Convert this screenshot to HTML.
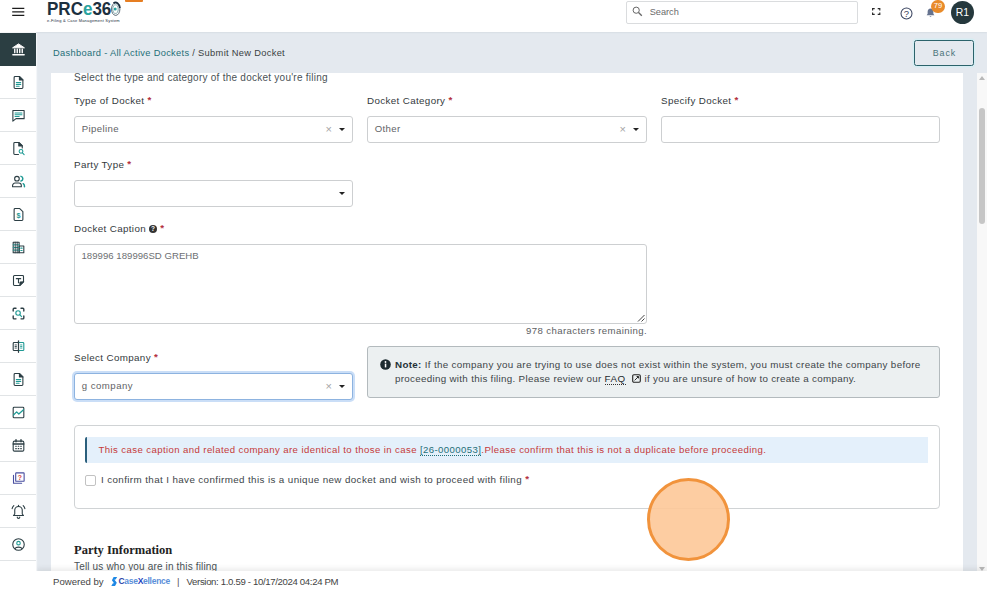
<!DOCTYPE html>
<html lang="en">
<head>
<meta charset="utf-8">
<title>Submit New Docket</title>
<style>
*{box-sizing:border-box;margin:0;padding:0}
html,body{width:987px;height:592px;overflow:hidden;background:#e4e9ef;font-family:"Liberation Sans",sans-serif;font-size:10px;color:#3a4144}
.abs{position:absolute}
#top{position:absolute;left:0;top:0;width:987px;height:32px;background:#fff;box-shadow:0 0 2px rgba(60,80,100,.18);z-index:5}
#side{position:absolute;left:0;top:33px;width:36px;height:559px;background:#fff;z-index:4;box-shadow:0 -1px 0 #fff, 1px 0 1px rgba(255,255,255,.6)}
.si{position:absolute;left:0;width:36px;height:33px;border-bottom:1px solid #e1e4e6}
.si svg{position:absolute}
#card{position:absolute;left:51px;top:73px;width:912px;height:499px;background:#fff;overflow:hidden}
#ci{position:absolute;left:0;top:-1px;width:912px;height:500px}
.lbl{position:absolute;font-size:9.8px;color:#33393c;white-space:nowrap;letter-spacing:.36px;line-height:12px}
.req{color:#b3303e;position:relative;top:-1px;font-weight:bold}
.inp{position:absolute;height:27px;border:1px solid #cdcfd1;border-radius:3px;background:#fff;font-size:9.6px;color:#5f6366;line-height:24px;padding-left:6.700px;letter-spacing:.38px}
.caret{position:absolute;right:7px;top:11px;width:0;height:0;border-left:3.2px solid transparent;border-right:3.2px solid transparent;border-top:3.6px solid #222}
.x{position:absolute;right:20px;top:0;font-size:11px;color:#a5a5a5;line-height:24px;letter-spacing:0}
.qm{display:inline-block;width:8px;height:8px;border-radius:4px;background:#333;color:#fff;font-size:6.5px;line-height:8px;text-align:center;font-weight:bold;letter-spacing:0;vertical-align:1px}
#foot{position:absolute;left:36px;top:571px;width:951px;height:21px;background:#fff;box-shadow:0 -2px 6px rgba(0,0,0,.09);z-index:3;font-size:9.6px;color:#444;line-height:21px;white-space:nowrap}
</style>
</head>
<body>
<div id="top">
  <svg class="abs" style="left:12px;top:7px" width="13" height="10" viewBox="0 0 13 10"><path d="M0.200 1.400h12.100M0.200 4.900h12.100M0.200 8.400h12.100" stroke="#1c1c1c" stroke-width="1.250"/></svg>
  <div class="abs" style="left:46.500px;top:-2px;font-size:18.600px;font-weight:bold;color:#1c3040;line-height:22px;white-space:nowrap;transform:scaleX(.915);transform-origin:0 0">PRC<span style="color:#2aa39f">e</span>36</div>
  <svg class="abs" style="left:110px;top:1px" width="12" height="16" viewBox="0 0 12 16"><ellipse cx="5.700" cy="8.100" rx="4.200" ry="6.300" fill="none" stroke="#1c3040" stroke-width=".7"/><ellipse cx="5.500" cy="8.100" rx="2.700" ry="4.300" fill="none" stroke="#5f8f95" stroke-width=".8"/><circle cx="5.200" cy="8" r="1.500" fill="#2aa39f"/><path d="M3.500 2.200A4.400 6.300 0 0 1 9.900 7" fill="none" stroke="#1c3040" stroke-width="1.700"/></svg>
  <div class="abs" style="left:47px;top:18.300px;font-size:4px;line-height:5px;color:#1c3040;white-space:nowrap;letter-spacing:.2px">e-Filing &amp; Case Management System</div>
  <div class="abs" style="left:125px;top:0;width:17.500px;height:2.400px;background:#e67e22;border-radius:0 0 1px 1px"></div>
  <div class="abs" style="left:625.500px;top:1px;width:232.500px;height:23px;border:1px solid #dadcde;border-radius:2px"></div>
  <svg class="abs" style="left:632px;top:6px" width="11" height="11" viewBox="0 0 11 11"><circle cx="4.200" cy="4.200" r="3.100" fill="none" stroke="#666" stroke-width="1"/><path d="M6.500 6.500L9.800 9.800" stroke="#666" stroke-width="1.300"/></svg>
  <div class="abs" style="left:649.700px;top:7.200px;font-size:9.200px;color:#6a6a6a">Search</div>
  <svg class="abs" style="left:872px;top:8px" width="9" height="7" viewBox="0 0 9 7"><path d="M0.600 2.400V0.600H2.700M5.700 0.600H7.800V2.400M7.800 4.600V6.400H5.700M2.700 6.400H0.600V4.600" fill="none" stroke="#2a2a2a" stroke-width="1.150"/></svg>
  <svg class="abs" style="left:899.700px;top:6.500px" width="13" height="13" viewBox="0 0 13 13"><circle cx="6.500" cy="6.500" r="5.500" fill="none" stroke="#3b4560" stroke-width="1.050"/><text x="6.500" y="9.800" font-size="9.500" text-anchor="middle" fill="#3b4560" font-family="Liberation Sans, sans-serif">?</text></svg>
  <svg class="abs" style="left:925.500px;top:7.500px" width="9" height="10" viewBox="0 0 11 12"><path d="M5.500 0.500C3.300 0.500 2 2.200 2 4.500V7L0.800 8.800H10.200L9 7V4.500C9 2.200 7.700 0.500 5.500 0.500ZM4.300 9.800A1.300 1.300 0 0 0 6.700 9.800Z" fill="#66738f"/></svg>
  <div class="abs" style="left:931px;top:0;width:14px;height:13px;border-radius:7px;background:#e98b2a;color:#fff;font-size:7.5px;line-height:12px;text-align:center">79</div>
  <div class="abs" style="left:951px;top:1px;width:23px;height:23px;border-radius:12px;background:#25383d;color:#fff;font-size:10.400px;line-height:23.500px;text-align:center">R1</div>
</div>

<div id="side">
<div class="si" style="top:0px;background:#2b3e42;border-bottom-color:#2b3e42"><svg viewBox="0 0 24 24" style="width:15px;height:15px;left:11px;top:9.400px" fill="none" stroke="#2c3e44" stroke-width="1.750" stroke-linecap="round" stroke-linejoin="round"><g stroke="#fff" fill="none"><path d="M3 9L12 3L21 9Z" fill="#fff" stroke-width="1.5"/><path d="M6 11.500V17M10 11.500V17M14 11.500V17M18 11.500V17" stroke-width="2.200"/><path d="M3 20.500H21" stroke-width="2.400"/></g></svg></div>
<div class="si" style="top:32.6px"><svg viewBox="0 0 24 24" style="width:15px;height:15px;left:11px;top:9.400px" fill="none" stroke="#2c3e44" stroke-width="1.750" stroke-linecap="round" stroke-linejoin="round"><path d="M6 2.500H14L19 7.500V20A1.500 1.500 0 0 1 17.500 21.500H6.500A1.500 1.500 0 0 1 5 20V4A1.500 1.500 0 0 1 6.500 2.500Z"/><path d="M13.500 2.500V8H19" fill="#2c3e44"/><path d="M8.500 12H15.500M8.500 15H15.500M8.500 18H13" stroke="#1f9a94" stroke-width="1.700"/></svg></div>
<div class="si" style="top:65.6px"><svg viewBox="0 0 24 24" style="width:15px;height:15px;left:11px;top:9.400px" fill="none" stroke="#2c3e44" stroke-width="1.750" stroke-linecap="round" stroke-linejoin="round"><path d="M3 4H21V17H8L3 21Z"/><path d="M6.500 8H17.500M6.500 10.800H17.500M6.500 13.500H13" stroke="#1f9a94" stroke-width="1.800"/></svg></div>
<div class="si" style="top:98.6px"><svg viewBox="0 0 24 24" style="width:15px;height:15px;left:11px;top:9.400px" fill="none" stroke="#2c3e44" stroke-width="1.750" stroke-linecap="round" stroke-linejoin="round"><path d="M12 21.500H6A1.500 1.500 0 0 1 4.500 20V4A1.500 1.500 0 0 1 6 2.500H13L18 7.500V11"/><path d="M12.500 2.500V8H18Z" fill="#2c3e44"/><circle cx="16" cy="16.500" r="3" stroke="#1f9a94"/><path d="M18.300 19L21 21.800" stroke="#1f9a94"/></svg></div>
<div class="si" style="top:131.6px"><svg viewBox="0 0 24 24" style="width:15px;height:15px;left:11px;top:9.400px" fill="none" stroke="#2c3e44" stroke-width="1.750" stroke-linecap="round" stroke-linejoin="round"><circle cx="9.500" cy="7.500" r="3.700"/><path d="M2.500 20.500V18.500A4 4 0 0 1 6.500 14.500H12.500A4 4 0 0 1 16.500 18.500V20.500Z"/><path d="M16 3.800A3.800 3.800 0 0 1 16 11.200M19.500 15.500A4 4 0 0 1 21.500 19V20.500" stroke="#1f9a94" stroke-width="2.400"/></svg></div>
<div class="si" style="top:164.6px"><svg viewBox="0 0 24 24" style="width:15px;height:15px;left:11px;top:9.400px" fill="none" stroke="#2c3e44" stroke-width="1.750" stroke-linecap="round" stroke-linejoin="round"><path d="M6 2.500H14L19 7.500V20A1.500 1.500 0 0 1 17.500 21.500H6.500A1.500 1.500 0 0 1 5 20V4A1.500 1.500 0 0 1 6.500 2.500Z"/><text x="12" y="18" font-size="11.500" font-weight="bold" fill="#1f9a94" stroke="none" text-anchor="middle" font-family="Liberation Sans, sans-serif">$</text></svg></div>
<div class="si" style="top:197.6px"><svg viewBox="0 0 24 24" style="width:15px;height:15px;left:11px;top:9.400px" fill="none" stroke="#2c3e44" stroke-width="1.750" stroke-linecap="round" stroke-linejoin="round"><path d="M3.500 3.500H13V20.500H3.500Z"/><path d="M13 9.500H20.500V20.500H13Z"/><path d="M3.500 7.700H13M3.500 12H13M3.500 16.200H13" stroke="#1f9a94" stroke-width="1.500"/><path d="M6.700 3.500V20.500M9.900 3.500V20.500" stroke-width="1.500"/><path d="M15.700 13H17.800M15.700 16.800H17.800" stroke="#1f9a94" stroke-width="1.700"/></svg></div>
<div class="si" style="top:230.6px"><svg viewBox="0 0 24 24" style="width:15px;height:15px;left:11px;top:9.400px" fill="none" stroke="#2c3e44" stroke-width="1.750" stroke-linecap="round" stroke-linejoin="round"><path d="M4 5.500A1.500 1.500 0 0 1 5.500 4H18.500A1.500 1.500 0 0 1 20 5.500V14L14 20H5.500A1.500 1.500 0 0 1 4 18.500Z"/><path d="M20 14H15.500A1.500 1.500 0 0 0 14 15.500V20Z" fill="#2c3e44" stroke-width="1"/><path d="M8.500 9H15.500M12 9V15.500" stroke-width="1.800"/></svg></div>
<div class="si" style="top:263.6px"><svg viewBox="0 0 24 24" style="width:15px;height:15px;left:11px;top:9.400px" fill="none" stroke="#2c3e44" stroke-width="1.750" stroke-linecap="round" stroke-linejoin="round"><path d="M3.500 8V5A1.500 1.500 0 0 1 5 3.500H8M16 3.500H19A1.500 1.500 0 0 1 20.500 5V8M20.500 16V19A1.500 1.500 0 0 1 19 20.500H16M8 20.500H5A1.500 1.500 0 0 1 3.500 19V16" stroke-width="2.200"/><circle cx="11.300" cy="11.300" r="3.600" stroke="#1f9a94"/><path d="M14 14L17 17" stroke="#1f9a94"/></svg></div>
<div class="si" style="top:296.6px"><svg viewBox="0 0 24 24" style="width:15px;height:15px;left:11px;top:9.400px" fill="none" stroke="#2c3e44" stroke-width="1.750" stroke-linecap="round" stroke-linejoin="round"><path d="M12.500 5.500H19A1.500 1.500 0 0 1 20.500 7V17A1.500 1.500 0 0 1 19 18.500H12.500" stroke="#1f9a94"/><path d="M15.300 9.500H17.500M15.300 12H17.500M15.300 14.500H17.500" stroke="#1f9a94" stroke-width="1.400"/><path d="M11.500 5.500H5A1.500 1.500 0 0 0 3.500 7V17A1.500 1.500 0 0 0 5 18.500H11.500"/><path d="M6.500 9.500H8.700M6.500 12H8.700M6.500 14.500H8.700" stroke-width="1.400"/><path d="M12 2.800V21.200" stroke-width="2"/></svg></div>
<div class="si" style="top:329.6px"><svg viewBox="0 0 24 24" style="width:15px;height:15px;left:11px;top:9.400px" fill="none" stroke="#2c3e44" stroke-width="1.750" stroke-linecap="round" stroke-linejoin="round"><path d="M6 2.500H14L19 7.500V20A1.500 1.500 0 0 1 17.500 21.500H6.500A1.500 1.500 0 0 1 5 20V4A1.500 1.500 0 0 1 6.500 2.500Z"/><path d="M13.500 2.500V8H19" fill="#2c3e44"/><path d="M8.500 12H15.500M8.500 15H15.500M8.500 18H13" stroke="#1f9a94" stroke-width="1.700"/></svg></div>
<div class="si" style="top:362.6px"><svg viewBox="0 0 24 24" style="width:15px;height:15px;left:11px;top:9.400px" fill="none" stroke="#2c3e44" stroke-width="1.750" stroke-linecap="round" stroke-linejoin="round"><rect x="3.500" y="3.500" width="17" height="17" rx="1.500"/><path d="M4 16L9 11L12.500 14.500L20 7.500" stroke="#1f9a94" stroke-width="2"/></svg></div>
<div class="si" style="top:395.6px"><svg viewBox="0 0 24 24" style="width:15px;height:15px;left:11px;top:9.400px" fill="none" stroke="#2c3e44" stroke-width="1.750" stroke-linecap="round" stroke-linejoin="round"><rect x="3.500" y="5" width="17" height="16" rx="2"/><path d="M3.500 9.500H20.500M8 2.500V6M16 2.500V6" stroke-width="2.200"/><path d="M7.500 13.200H8.500M11.500 13.200H12.500M15.500 13.200H16.500M7.500 17H8.500M11.500 17H12.500M15.500 17H16.500" stroke-width="1.800"/></svg></div>
<div class="si" style="top:428.6px"><svg viewBox="0 0 24 24" style="width:15px;height:15px;left:11px;top:9.400px" fill="none" stroke="#2c3e44" stroke-width="1.750" stroke-linecap="round" stroke-linejoin="round"><g stroke="#4a4fa0"><rect x="7.500" y="3" width="13.500" height="13.500" rx="1"/><path d="M4 7V19.500H17"/></g><text x="14.200" y="14" font-size="11" font-weight="bold" fill="#d9453b" stroke="none" text-anchor="middle" font-family="Liberation Sans, sans-serif">?</text></svg></div>
<div class="si" style="top:461.6px"><svg viewBox="0 0 24 24" style="width:15px;height:15px;left:11px;top:9.400px" fill="none" stroke="#2c3e44" stroke-width="1.750" stroke-linecap="round" stroke-linejoin="round"><path d="M12 4A6 6 0 0 0 6 10V16L4 18.500H20L18 16V10A6 6 0 0 0 12 4Z"/><path d="M10 21A2 2 0 0 0 14 21" stroke-width="1.800"/><path d="M12 2.200V4" stroke-width="1.800"/><path d="M4.500 2.500A9 9 0 0 0 1.800 7.500M19.500 2.500A9 9 0 0 1 22.200 7.500" stroke-width="1.800"/></svg></div>
<div class="si" style="top:494.6px"><svg viewBox="0 0 24 24" style="width:15px;height:15px;left:11px;top:9.400px" fill="none" stroke="#2c3e44" stroke-width="1.750" stroke-linecap="round" stroke-linejoin="round"><circle cx="12" cy="12" r="9.200"/><circle cx="12" cy="9.800" r="2.800" stroke="#1f9a94"/><path d="M6.500 18.500C8 15.500 16 15.500 17.500 18.500" stroke-width="1.800"/></svg></div>
</div>

<div class="abs" style="left:53px;top:48px;font-size:9.300px;color:#3a3f42;white-space:nowrap;letter-spacing:.31px"><span style="color:#1f6f78">Dashboard - All Active Dockets</span> / Submit New Docket</div>
<div class="abs" style="left:914px;top:40px;width:60px;height:26px;border:1.5px solid #2b636b;border-radius:2.500px;color:#4a747a;font-size:8.900px;line-height:25.400px;text-align:center;letter-spacing:.95px;text-indent:.9px;box-shadow:0 0 0 1.500px rgba(205,240,245,.65)">Back</div>

<div id="card"><div id="ci">
<div class="abs" style="left:23px;top:0px;font-size:10px;color:#4a5256;white-space:nowrap;letter-spacing:.25px;line-height:12px">Select the type and category of the docket you're filing</div>

<div class="lbl" style="left:23px;top:23px">Type of Docket <span class="req">*</span></div>
<div class="lbl" style="left:316px;top:23px">Docket Category <span class="req">*</span></div>
<div class="lbl" style="left:610px;top:23px">Specify Docket <span class="req">*</span></div>
<div class="inp" style="left:23px;top:44px;width:279px">Pipeline<span class="x">×</span><i class="caret"></i></div>
<div class="inp" style="left:316px;top:44px;width:280px">Other<span class="x">×</span><i class="caret"></i></div>
<div class="inp" style="left:610px;top:44px;width:279px"></div>

<div class="lbl" style="left:23px;top:87px">Party Type <span class="req">*</span></div>
<div class="inp" style="left:23px;top:108px;width:279px"><i class="caret"></i></div>

<div class="lbl" style="left:23px;top:151px">Docket Caption <span class="qm">?</span> <span class="req">*</span></div>
<div class="inp" style="left:23px;top:172px;width:573px;height:80px;line-height:21px;letter-spacing:.02px;padding-left:6.500px;color:#6d7073">189996 189996SD GREHB
<svg class="abs" style="right:1px;bottom:1px" width="8" height="8" viewBox="0 0 8 8"><path d="M7.500 1L1 7.500M7.500 4.500L4.500 7.500" stroke="#444" stroke-width="1"/></svg></div>
<div class="abs" style="left:400px;top:253px;width:196px;text-align:right;font-size:9.6px;color:#5c6063;letter-spacing:.4px;line-height:12px;white-space:nowrap">978 characters remaining.</div>

<div class="lbl" style="left:23px;top:280px">Select Company <span class="req">*</span></div>
<div class="inp" style="left:23px;top:301px;width:279px;border-color:#8db3e0;box-shadow:0 0 0 2px rgba(150,190,240,.5);letter-spacing:.5px">g company<span class="x">×</span><i class="caret"></i></div>

<div class="abs" style="left:316px;top:274px;width:573px;height:52px;border:1px solid #b3babd;border-radius:3px;background:#ecf0f1"></div>
<svg class="abs" style="left:329px;top:287px" width="11" height="11" viewBox="0 0 11 11"><circle cx="5.5" cy="5.5" r="5.300" fill="#1d2b31"/><rect x="4.800" y="4.600" width="1.500" height="3.800" fill="#fff"/><circle cx="5.500" cy="3" r=".9" fill="#fff"/></svg>
<div class="abs" style="left:344px;top:286px;font-size:9.8px;line-height:14px;color:#3d4548;white-space:nowrap;letter-spacing:.33px"><b style="color:#263238">Note:</b> If the company you are trying to use does not exist within the system, you must create the company before<br><span style="letter-spacing:.3px">proceeding with this filing. Please review our <span style="color:#1f2a2e;border-bottom:1px dotted #333;letter-spacing:.45px">FAQ</span> <svg width="9" height="9" viewBox="0 0 9 9" style="margin:0 1px 0 3px;vertical-align:-1px"><rect x=".7" y=".7" width="7.600" height="7.600" rx="1.200" fill="none" stroke="#222" stroke-width="1.100"/><path d="M2.600 6.400L6.400 2.600M4.600 2.500H6.500V4.400" fill="none" stroke="#222" stroke-width=".95"/></svg> if you are unsure of how to create a company.</span></div>

<div class="abs" style="left:23px;top:353px;width:866px;height:84px;border:1px solid #d0d3d5;border-radius:4px"></div>
<div class="abs" style="left:34px;top:365px;width:843px;height:26px;background:#e4f0fb;border-left:2px solid #2a5f7c;border-radius:2px 0 0 2px"></div>
<div class="abs" style="left:47.500px;top:372px;font-size:9.6px;line-height:12px;color:#c43a3a;white-space:nowrap;letter-spacing:.4px">This case caption and related company are identical to those in case <span style="color:#1f6f78;border-bottom:1px dotted #1f6f78">[26-0000053]</span>.Please confirm that this is not a duplicate before proceeding.</div>
<div class="abs" style="left:34px;top:403px;width:11px;height:11px;border:1px solid #c2c2c2;border-radius:2px;background:#fff"></div>
<div class="abs" style="left:50px;top:402px;font-size:9.8px;line-height:12px;color:#3d4548;white-space:nowrap;letter-spacing:.39px">I confirm that I have confirmed this is a unique new docket and wish to proceed with filing <span class="req">*</span></div>

<div class="abs" style="left:23px;top:470px;font-family:'Liberation Serif',serif;font-weight:bold;font-size:12.5px;color:#222;line-height:16px;white-space:nowrap">Party Information</div>
<div class="abs" style="left:23px;top:489.400px;font-size:10px;color:#4a5256;white-space:nowrap;letter-spacing:.16px;line-height:12px">Tell us who you are in this filing</div>
</div></div>

<div class="abs" style="left:977px;top:73px;width:10px;height:498px;background:#f8f8f8"></div>
<div class="abs" style="left:979px;top:75.500px;width:0;height:0;border-left:3px solid transparent;border-right:3px solid transparent;border-bottom:4px solid #b9b9b9"></div>
<div class="abs" style="left:979px;top:567px;width:0;height:0;border-left:3px solid transparent;border-right:3px solid transparent;border-top:4px solid #b9b9b9"></div>
<div class="abs" style="left:979px;top:108px;width:6px;height:116px;border-radius:3px;background:#c6c6c6"></div>

<div id="foot"><span style="position:absolute;left:17px;top:0">Powered by</span>
<svg style="position:absolute;left:74.500px;top:6px" width="7" height="9" viewBox="0 0 7 9"><path d="M2.600 0H6.200L4.600 2.600H3.400L5.800 5.800L4 9H0.300L1.900 6.300H3L0.900 3.200Z" fill="#1e88e5"/></svg>
<span style="position:absolute;left:82.500px;top:0;font-size:8.500px;font-weight:bold;letter-spacing:-.28px;color:#5b8fd9"><span style="color:#2d44a8">C</span>ase<span style="color:#1f3fc0">X</span>ellence</span>
<span style="position:absolute;left:141px;top:-.5px;color:#555">|</span>
<span style="position:absolute;left:150.500px;top:0;letter-spacing:-.34px">Version: 1.0.59 - 10/17/2024 04:24 PM</span></div>

<div class="abs" style="left:647px;top:478px;width:83px;height:83px;border-radius:50%;background:rgba(253,200,152,.9);border:3.600px solid #f1933c;z-index:9"></div>
</body>
</html>
